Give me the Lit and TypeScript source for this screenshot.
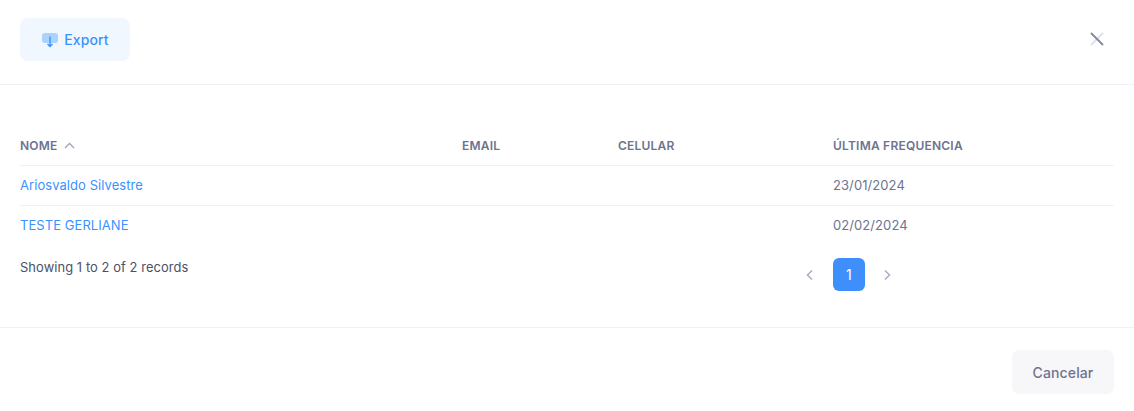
import { LitElement, html, css } from "lit";
import { customElement } from "lit/decorators.js";

const rows = [
  { name: "Ariosvaldo Silvestre", last: "23/01/2024" },
  { name: "TESTE GERLIANE", last: "02/02/2024" },
];

@customElement("app-root")
export class AppRoot extends LitElement {
  static styles = css`
    :host {
      display: block;
      background: #fff;
      height: 411px;
      font-family: Inter, "Liberation Sans", sans-serif;
      font-size: 13px;
      letter-spacing: 0.08px;
      color: #6d7390;
      overflow: hidden;
    }
    .head {
      display: flex;
      align-items: center;
      justify-content: space-between;
      height: 85px;
      padding: 18px 29px 23px 20px;
      box-sizing: border-box;
      border-bottom: 1px solid #eff2f5;
    }
    .export {
      display: flex;
      align-items: center;
      justify-content: center;
      gap: 5px;
      width: 110px;
      height: 43px;
      box-sizing: border-box;
      border-radius: 8px;
      background: #f0f7ff;
      color: #3a92ff;
      font-size: 14px;
      font-weight: 500;
      letter-spacing: 0.12px;
    }
    .close {
      display: block;
      margin-bottom: 2px;
    }
    .body {
      height: 243px;
      padding: 41px 20px 0 20px;
      box-sizing: border-box;
      border-bottom: 1px solid #eff2f5;
    }
    .row {
      display: grid;
      grid-template-columns: 442px 156px 215px 1fr;
      align-items: center;
      height: 40px;
      padding-bottom: 2px;
      border-bottom: 1px solid #eff2f5;
      box-sizing: border-box;
    }
    .row.last {
      border-bottom: none;
    }
    .th {
      padding-bottom: 0;
      font-size: 12px;
      font-weight: 600;
      color: #6d7390;
      letter-spacing: 0.22px;
    }
    .th span {
      display: flex;
      align-items: center;
      gap: 6px;
    }
    .link {
      color: #3a92ff;
      letter-spacing: 0.06px;
    }
    .foot {
      display: flex;
      align-items: flex-start;
    }
    .info {
      width: 785px;
      padding-top: 13px;
      color: #4b5168;
      font-size: 12.9px;
      line-height: 18px;
    }
    .pager {
      display: flex;
      align-items: center;
      gap: 19px 18px;
      padding-top: 12px;
    }
    .prev {
      margin-right: 1px;
    }
    .num {
      width: 32px;
      height: 33px;
      border-radius: 6px;
      background: #3e8ffb;
      color: #fff;
      font-size: 14px;
      font-weight: 400;
      display: flex;
      align-items: center;
      justify-content: center;
    }
    .actions {
      display: flex;
      justify-content: flex-end;
      padding: 22px 20px 0 0;
    }
    .cancel {
      width: 102px;
      height: 44px;
      border-radius: 7px;
      background: #f7f7f9;
      color: #6d7390;
      font-size: 14px;
      font-weight: 500;
      letter-spacing: 0.12px;
      display: flex;
      align-items: center;
      justify-content: center;
    }
  `;

  render() {
    return html`
      <div class="head">
        <div class="export">
          <svg width="18" height="16" viewBox="0 0 18 16">
            <rect x="1" y="1" width="16" height="10" rx="3" fill="#a9d2ff"></rect>
            <path d="M9 4.500v10M6.500 12 9 14.500 11.500 12" fill="none" stroke="#3a92ff" stroke-width="1.400"></path>
          </svg>
          Export
        </div>
        <svg class="close" width="16" height="16" viewBox="0 0 16 16">
          <path d="M2 14 14 2" stroke="#dfe1ea" stroke-width="1.800"></path>
          <path d="M2 2l12 12" stroke="#7e86a3" stroke-width="1.800"></path>
        </svg>
      </div>
      <div class="body">
        <div class="row th">
          <span>NOME
            <svg width="11" height="7" viewBox="0 0 11 7">
              <path d="M1 6l4.500-4.500L10 6" fill="none" stroke="#a1a5b7" stroke-width="1.300"></path>
            </svg>
          </span>
          <div>EMAIL</div>
          <div>CELULAR</div>
          <div>ÚLTIMA FREQUENCIA</div>
        </div>
        ${rows.map(
          (r, i) => html`
            <div class="row ${i === rows.length - 1 ? "last" : ""}">
              <div class="link">${r.name}</div>
              <div></div>
              <div></div>
              <div>${r.last}</div>
            </div>
          `
        )}
        <div class="foot">
          <div class="info">Showing 1 to 2 of 2 records</div>
          <div class="pager">
            <svg class="prev" width="9" height="12" viewBox="0 0 9 12">
              <path d="M7 1.500 2.500 6 7 10.500" fill="none" stroke="#a9adbd" stroke-width="1.500"></path>
            </svg>
            <div class="num">1</div>
            <svg width="9" height="12" viewBox="0 0 9 12">
              <path d="M2 1.500 6.500 6 2 10.500" fill="none" stroke="#a9adbd" stroke-width="1.500"></path>
            </svg>
          </div>
        </div>
      </div>
      <div class="actions"><div class="cancel">Cancelar</div></div>
    `;
  }
}
